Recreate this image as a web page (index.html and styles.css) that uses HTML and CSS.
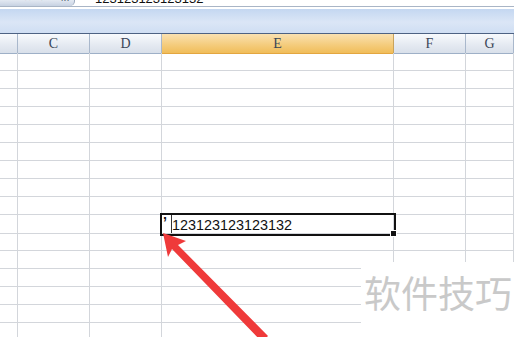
FILE: index.html
```html
<!DOCTYPE html>
<html lang="zh-CN">
  <head>
    <meta charset="UTF-8" />
    <title>Excel - 123123123123132</title>
    <link rel="stylesheet" href="styles.css">
  </head>
  <body>
    <div class="formula">
      <div class="fx-box">
        <span class="fx-icon">✕</span>
        <span class="fx-icon">✓</span>
        <span class="fx-icon fx">fx</span>
      </div>
      <div class="fx-input"><span>123123123123132</span></div>
    </div>
    <div class="band"></div>

    <div class="sheet">
      <div class="row head">
        <div class="cell"></div>
        <div class="cell">C</div>
        <div class="cell">D</div>
        <div class="cell active">E</div>
        <div class="cell">F</div>
        <div class="cell">G</div>
      </div>
      <div class="row"><div class="cell"></div><div class="cell"></div><div class="cell"></div><div class="cell"></div><div class="cell"></div><div class="cell"></div></div>
      <div class="row"><div class="cell"></div><div class="cell"></div><div class="cell"></div><div class="cell"></div><div class="cell"></div><div class="cell"></div></div>
      <div class="row"><div class="cell"></div><div class="cell"></div><div class="cell"></div><div class="cell"></div><div class="cell"></div><div class="cell"></div></div>
      <div class="row"><div class="cell"></div><div class="cell"></div><div class="cell"></div><div class="cell"></div><div class="cell"></div><div class="cell"></div></div>
      <div class="row"><div class="cell"></div><div class="cell"></div><div class="cell"></div><div class="cell"></div><div class="cell"></div><div class="cell"></div></div>
      <div class="row"><div class="cell"></div><div class="cell"></div><div class="cell"></div><div class="cell"></div><div class="cell"></div><div class="cell"></div></div>
      <div class="row"><div class="cell"></div><div class="cell"></div><div class="cell"></div><div class="cell"></div><div class="cell"></div><div class="cell"></div></div>
      <div class="row"><div class="cell"></div><div class="cell"></div><div class="cell"></div><div class="cell"></div><div class="cell"></div><div class="cell"></div></div>
      <div class="row"><div class="cell"></div><div class="cell"></div><div class="cell"></div><div class="cell"></div><div class="cell"></div><div class="cell"></div></div>
      <div class="row">
        <div class="cell"></div><div class="cell"></div><div class="cell"></div>
        <div class="cell editing">
          <span class="quote">’</span><span class="caret"></span><span class="value">123123123123132</span>
          <span class="handle"></span>
        </div>
        <div class="cell"></div><div class="cell"></div>
      </div>
      <div class="row"><div class="cell"></div><div class="cell"></div><div class="cell"></div><div class="cell"></div><div class="cell"></div><div class="cell"></div></div>
      <div class="row"><div class="cell"></div><div class="cell"></div><div class="cell"></div><div class="cell"></div><div class="cell"></div><div class="cell"></div></div>
      <div class="row"><div class="cell"></div><div class="cell"></div><div class="cell"></div><div class="cell"></div><div class="cell"></div><div class="cell"></div></div>
      <div class="row"><div class="cell"></div><div class="cell"></div><div class="cell"></div><div class="cell"></div><div class="cell"></div><div class="cell"></div></div>
      <div class="row"><div class="cell"></div><div class="cell"></div><div class="cell"></div><div class="cell"></div><div class="cell"></div><div class="cell"></div></div>
      <div class="row"><div class="cell"></div><div class="cell"></div><div class="cell"></div><div class="cell"></div><div class="cell"></div><div class="cell"></div></div>
    </div>

    <div class="watermark">软件技巧</div>

    <svg class="arrow" width="514" height="337" viewBox="0 0 514 337">
      <polygon points="163,233 186,241 178,245 268,336 262,342 172,249 168,257" fill="#ef3a3a" />
    </svg>
  </body>
</html>
```

FILE: styles.css
```css
body {
  margin: 0;
  width: 514px;
  height: 337px;
  overflow: hidden;
  position: relative;
  background-color: white;
  font-family: "Liberation Serif", serif;
}
.formula {
  display: flex;
  height: 6px;
  border-bottom: 1px solid #a9b5c6;
  overflow: hidden;
}
.fx-box {
  width: 75px;
  display: flex;
  gap: 8px;
  padding-left: 24px;
  box-sizing: border-box;
  background: linear-gradient(#e3e9f2, #c7d2e2);
  border-right: 1px solid #9aa8bc;
  border-bottom-right-radius: 5px;
  font-family: "DejaVu Sans", sans-serif;
  font-size: 9px;
  line-height: 9px;
  color: #4a5668;
}
.fx-icon {
  margin-top: -6px;
}
.fx {
  font-style: italic;
  margin-left: 6px;
}
.fx-input {
  flex: 1;
  padding-left: 20px;
  font-family: "Liberation Sans", sans-serif;
  font-size: 13px;
  line-height: 12px;
  color: #111;
}
.fx-input span {
  display: block;
  margin-top: -7px;
}
.band {
  height: 24px;
  border-top: 2px solid #fff;
  border-bottom: 1px solid #4d6283;
  background: linear-gradient(#c4d7f1, #dbe6f6 55%, #cfdef3);
}
.row {
  display: grid;
  grid-template-columns: 18px 72px 72px 232px 72px 1fr;
  height: 18px;
}
.cell {
  border-right: 1px solid #d3d6db;
  border-bottom: 1px solid #d3d6db;
  position: relative;
}
.head {
  height: 19px;
}
.head .cell {
  background: linear-gradient(#f8fafd, #e4e9f1 60%, #d9e0ea);
  border-right-color: #a9b8cc;
  border-bottom-color: #9eb0c7;
  text-align: center;
  font-size: 14px;
  line-height: 19px;
  color: #3a4657;
}
.head .active {
  background: linear-gradient(#fae1b1, #f4cb7a 60%, #f0bd5a);
  border-bottom-color: #e3a640;
  border-right-color: #c9a35c;
}
.editing {
  outline: 2px solid #111;
  outline-offset: 0;
  display: flex;
  align-items: center;
  font-family: "Liberation Sans", sans-serif;
  font-size: 14.4px;
  color: #111;
  z-index: 1;
}
.quote {
  width: 8px;
  padding-left: 1px;
  font-weight: bold;
  margin-top: -4px;
}
.caret {
  width: 1px;
  align-self: stretch;
  margin-top: -1px;
  background-color: #333;
}
.value {
  padding-top: 2px;
}
.handle {
  position: absolute;
  right: -4px;
  bottom: -4px;
  width: 5px;
  height: 5px;
  background-color: #111;
  border: 1px solid #fff;
}
.watermark {
  position: absolute;
  left: 361px;
  top: 262px;
  width: 153px;
  height: 75px;
  background-color: white;
  padding: 10px 0 0 3px;
  box-sizing: border-box;
  font-family: "Noto Sans CJK SC", sans-serif;
  font-size: 37px;
  line-height: 40px;
  color: #c9c9c9;
  z-index: 2;
}
.arrow {
  position: absolute;
  left: 0;
  top: 0;
  z-index: 3;
}
```
